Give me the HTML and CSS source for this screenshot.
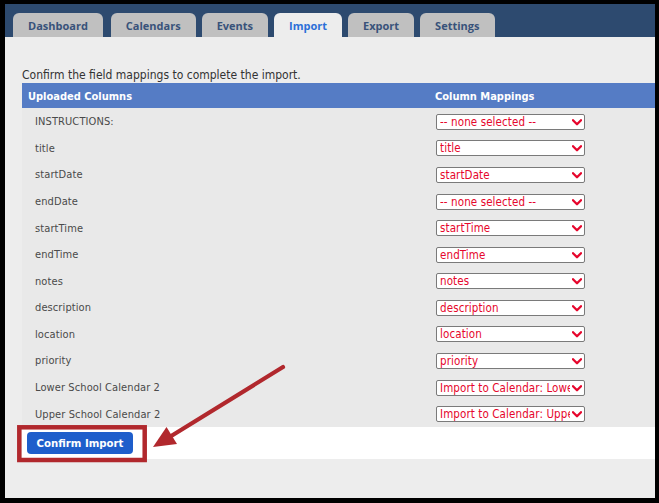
FILE: index.html
```html
<!DOCTYPE html>
<html lang="en">
<head>
<meta charset="utf-8">
<title>Import</title>
<link rel="stylesheet" href="styles.css">
</head>
<body>
<div class="frame">
  <div class="app">
    <nav class="tabs">
      <a class="tab first">Dashboard</a>
      <a class="tab">Calendars</a>
      <a class="tab">Events</a>
      <a class="tab active">Import</a>
      <a class="tab">Export</a>
      <a class="tab">Settings</a>
    </nav>
    <main class="content">
      <p class="intro">Confirm the field mappings to complete the import.</p>
      <div class="mapping">
        <div class="head"><div class="col-a">Uploaded Columns</div><div class="col-b">Column Mappings</div></div>
        <div class="row"><div class="col-a">INSTRUCTIONS:</div><div class="col-b"><span class="sel"><select><option>-- none selected --</option></select><svg class="chev" viewBox="0 0 10 7" width="10" height="7"><polyline points="1,1.2 5,5.2 9,1.2"/></svg></span></div></div>
        <div class="row"><div class="col-a">title</div><div class="col-b"><span class="sel"><select><option>title</option></select><svg class="chev" viewBox="0 0 10 7" width="10" height="7"><polyline points="1,1.2 5,5.2 9,1.2"/></svg></span></div></div>
        <div class="row"><div class="col-a">startDate</div><div class="col-b"><span class="sel"><select><option>startDate</option></select><svg class="chev" viewBox="0 0 10 7" width="10" height="7"><polyline points="1,1.2 5,5.2 9,1.2"/></svg></span></div></div>
        <div class="row"><div class="col-a">endDate</div><div class="col-b"><span class="sel"><select><option>-- none selected --</option></select><svg class="chev" viewBox="0 0 10 7" width="10" height="7"><polyline points="1,1.2 5,5.2 9,1.2"/></svg></span></div></div>
        <div class="row"><div class="col-a">startTime</div><div class="col-b"><span class="sel"><select><option>startTime</option></select><svg class="chev" viewBox="0 0 10 7" width="10" height="7"><polyline points="1,1.2 5,5.2 9,1.2"/></svg></span></div></div>
        <div class="row"><div class="col-a">endTime</div><div class="col-b"><span class="sel"><select><option>endTime</option></select><svg class="chev" viewBox="0 0 10 7" width="10" height="7"><polyline points="1,1.2 5,5.2 9,1.2"/></svg></span></div></div>
        <div class="row"><div class="col-a">notes</div><div class="col-b"><span class="sel"><select><option>notes</option></select><svg class="chev" viewBox="0 0 10 7" width="10" height="7"><polyline points="1,1.2 5,5.2 9,1.2"/></svg></span></div></div>
        <div class="row"><div class="col-a">description</div><div class="col-b"><span class="sel"><select><option>description</option></select><svg class="chev" viewBox="0 0 10 7" width="10" height="7"><polyline points="1,1.2 5,5.2 9,1.2"/></svg></span></div></div>
        <div class="row"><div class="col-a">location</div><div class="col-b"><span class="sel"><select><option>location</option></select><svg class="chev" viewBox="0 0 10 7" width="10" height="7"><polyline points="1,1.2 5,5.2 9,1.2"/></svg></span></div></div>
        <div class="row"><div class="col-a">priority</div><div class="col-b"><span class="sel"><select><option>priority</option></select><svg class="chev" viewBox="0 0 10 7" width="10" height="7"><polyline points="1,1.2 5,5.2 9,1.2"/></svg></span></div></div>
        <div class="row"><div class="col-a">Lower School Calendar 2</div><div class="col-b"><span class="sel"><select><option>Import to Calendar: Lower School Calendar 2</option></select><svg class="chev" viewBox="0 0 10 7" width="10" height="7"><polyline points="1,1.2 5,5.2 9,1.2"/></svg></span></div></div>
        <div class="row"><div class="col-a">Upper School Calendar 2</div><div class="col-b"><span class="sel"><select><option>Import to Calendar: Upper School Calendar 2</option></select><svg class="chev" viewBox="0 0 10 7" width="10" height="7"><polyline points="1,1.2 5,5.2 9,1.2"/></svg></span></div></div>
        <div class="actions"><button class="confirm" type="button">Confirm Import</button></div>
      </div>
    </main>
  </div>
  <svg class="annot" viewBox="0 0 659 503" width="659" height="503">
    <rect x="19.3" y="427.3" width="125.4" height="32.7" fill="none" stroke="#b1282d" stroke-width="4.5"/>
    <line x1="283" y1="367" x2="172" y2="435.5" stroke="#b1282d" stroke-width="4.2" stroke-linecap="round"/>
    <polygon points="153,447 166.5,427 177,444" fill="#b1282d"/>
  </svg>
</div>
</body>
</html>
```

FILE: styles.css
```css
html, body {
  margin: 0;
  padding: 0;
  background: #000;
}

.frame {
  position: relative;
  width: 659px;
  height: 503px;
  box-sizing: border-box;
  padding: 4px 4px 5px 5px;
  background: #000;
}

.app {
  height: 100%;
  background: #ededed;
  overflow: hidden;
  display: flex;
  flex-direction: column;
  font-family: "DejaVu Sans Condensed", "DejaVu Sans", sans-serif;
  font-stretch: condensed;
}

.tabs {
  height: 33px;
  box-sizing: border-box;
  background: #2d4a6f;
  padding: 9px 0 0 8px;
  display: flex;
  align-items: flex-end;
  gap: 6px;
  flex-shrink: 0;
}

.tab {
  height: 24px;
  box-sizing: border-box;
  padding: 0 15px;
  display: flex;
  align-items: center;
  background: #c0c0c0;
  color: #38527a;
  border-radius: 6px 6px 0 0;
  font-family: "Open Sans", sans-serif;
  font-stretch: normal;
  font-weight: 700;
  font-size: 11px;
}

.tab.first { margin-right: 2px; }

.tab.active {
  background: #ededed;
  color: #2b6fd8;
}

.content {
  padding: 31px 0 0 17px;
  flex: 1;
}

.intro {
  margin: 0 0 1px;
  font-size: 12px;
  line-height: 14px;
  color: #333;
}

.mapping {
  display: flex;
  flex-direction: column;
}

.head {
  height: 25px;
  background: #557cc5;
  color: #fff;
  font-weight: 700;
  font-size: 11px;
  display: flex;
  align-items: center;
  padding-top: 1px;
  box-sizing: border-box;
}

.head .col-a { padding-left: 6px; }

.col-a {
  width: 413px;
  box-sizing: border-box;
  flex-shrink: 0;
}

.row {
  height: 26.58px;
  box-sizing: border-box;
  padding-top: 1px;
  background: #e9e9e9;
  display: flex;
  align-items: center;
  font-size: 11px;
  letter-spacing: 0.1px;
  color: #4a4a4a;
}

.row .col-a { padding-left: 13px; }
.row .col-b { padding-left: 1px; display: flex; }

.sel {
  position: relative;
  display: inline-block;
  width: 149px;
  height: 16px;
}

.sel select {
  appearance: none;
  -webkit-appearance: none;
  width: 149px;
  height: 16px;
  box-sizing: border-box;
  margin: 0;
  border: 1px solid #7a7a7a;
  border-radius: 2px;
  background: #fff;
  color: #e6062c;
  font-family: "DejaVu Sans Condensed", "DejaVu Sans", sans-serif;
  font-stretch: condensed;
  font-size: 11.5px;
  letter-spacing: 0.1px;
  line-height: 14px;
  padding: 0 14px 0 3px;
  display: block;
}

.chev {
  position: absolute;
  right: 3px;
  top: 5px;
  fill: none;
  stroke: #e6062c;
  stroke-width: 2.3;
  stroke-linecap: round;
  stroke-linejoin: round;
}

.actions {
  height: 32px;
  box-sizing: border-box;
  background: #fff;
  padding: 5px 0 0 5px;
}

.confirm {
  width: 106px;
  height: 22px;
  margin: 0;
  padding: 0;
  border: none;
  border-radius: 4px;
  background: #1e5ecb;
  color: #fff;
  font-family: "DejaVu Sans Condensed", "DejaVu Sans", sans-serif;
  font-stretch: condensed;
  font-weight: 700;
  font-size: 11.3px;
}

.annot {
  position: absolute;
  left: 0;
  top: 0;
  pointer-events: none;
}
```
